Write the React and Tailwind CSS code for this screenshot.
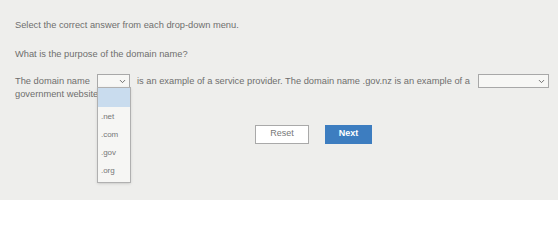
import { ChevronDown } from 'lucide-react';

function Select({ width, open }) {
  return (
    <span className="relative inline-block align-middle">
      <span
        className="inline-flex h-[14px] items-center justify-end border border-[#a8a8a8] bg-[#f7f7f5] pr-[2px]"
        style={{ width }}
      >
        <ChevronDown size={9} strokeWidth={2.5} className="text-[#666]" />
      </span>
      {open && (
        <span className="absolute left-0 top-[13px] z-10 flex w-[34px] flex-col border border-[#b0b0b0] bg-[#f6f6f4] shadow-sm">
          <span className="h-[19px] bg-[#c9dcee]" />
          {['.net', '.com', '.gov', '.org'].map((opt) => (
            <span key={opt} className="flex h-[18px] items-center pl-[3px] text-[8px] text-[#777]">
              {opt}
            </span>
          ))}
          <span className="h-[3px]" />
        </span>
      )}
    </span>
  );
}

export default function App() {
  return (
    <div className="h-[200px] w-[558px] overflow-hidden bg-[#eeeeec] pl-[15px] pt-[20px] font-['Liberation_Sans',Arial,sans-serif] text-[9.3px] text-[#6e6e6e]">
      <p className="leading-[11px]">Select the correct answer from each drop-down menu.</p>
      <p className="mt-[18px] leading-[11px]">What is the purpose of the domain name?</p>
      <div className="mt-[14px] leading-[11px]">
        <div className="flex items-center">
          <span>The domain name</span>
          <span className="ml-[7px]">
            <Select width={33} open />
          </span>
          <span className="ml-[7px]">
            is an example of a service provider. The domain name .gov.nz is an example of a
          </span>
          <span className="ml-[8px]">
            <Select width={71} />
          </span>
        </div>
        <div>government website</div>
      </div>
      <div className="mt-[25px] flex pl-[240px]">
        <button className="h-[19px] w-[54px] border border-[#a9a9a9] bg-white text-[9px] text-[#777]">
          Reset
        </button>
        <button className="ml-[16px] h-[19px] w-[47px] bg-[#3d7dc0] text-[9px] font-bold text-white">
          Next
        </button>
      </div>
    </div>
  );
}
